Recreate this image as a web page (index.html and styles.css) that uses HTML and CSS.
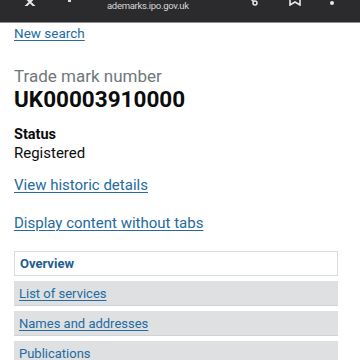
FILE: index.html
```html
<!DOCTYPE html>
<html lang="en">
<head>
<meta charset="utf-8">
<link rel="stylesheet" href="styles.css">
</head>
<body>
<div class="chrome">
  <div class="chrome-left">
    <svg class="ic-x" width="16" height="6" viewBox="0 0 16 6"><path d="M2 -4 L14 8 M14 -4 L2 8" stroke="#e8e8e8" stroke-width="2"/></svg>
    <span class="dot-sm"></span>
  </div>
  <div class="url">ademarks.ipo.gov.uk</div>
  <div class="chrome-right">
    <svg width="12" height="8" viewBox="0 0 12 8"><circle cx="7" cy="3" r="2" fill="none" stroke="#e8e8e8" stroke-width="1.5"/><path d="M2 -2 L6 2" stroke="#e8e8e8" stroke-width="1.5"/></svg>
    <svg width="14" height="6" viewBox="0 0 14 6"><path d="M2 -2 V5 L7 2 L12 5 V-2" fill="none" stroke="#e8e8e8" stroke-width="1.6"/></svg>
    <span class="kebab"></span>
  </div>
</div>
<main class="page">
  <a class="link new-search" href="#">New search</a>
  <div class="label">Trade mark number</div>
  <h1 class="number">UK00003910000</h1>
  <div class="status-title">Status</div>
  <div class="status-value">Registered</div>
  <a class="link block-link historic" href="#">View historic details</a>
  <a class="link block-link notabs" href="#">Display content without tabs</a>
  <ul class="tabs">
    <li class="tab active"><span>Overview</span></li>
    <li class="tab"><a class="link" href="#">List of services</a></li>
    <li class="tab"><a class="link" href="#">Names and addresses</a></li>
    <li class="tab"><a class="link" href="#">Publications</a></li>
  </ul>
</main>
</body>
</html>
```
FILE: styles.css
```css
* { box-sizing: border-box; }
html, body { margin: 0; padding: 0; background: #fff; }
body { font-family: Roboto, "Noto Sans", Arial, sans-serif; color: #0b0c0c; width: 360px; height: 360px; overflow: hidden; }

.chrome {
  height: 23px;
  background: #2b2b2d;
  border-bottom: 1px solid #8d8d8f;
  display: flex;
  align-items: flex-start;
}
.chrome-left { display: flex; align-items: flex-start; gap: 30px; padding-left: 22px; width: 107px; }
.dot-sm { width: 3px; height: 2px; background: #ddd; }
.url {
  font-size: 9.5px;
  color: #d6d6d6;
  letter-spacing: -0.3px;
  line-height: 12px;
}
.chrome-right { display: flex; align-items: flex-start; margin-left: auto; gap: 28px; padding-right: 26px; }
.kebab { width: 4px; height: 4px; border-radius: 50%; background: #e8e8e8; margin-top: 1px; }

.page { padding: 0 14px; }

.link { color: #236ba0; text-decoration: underline; text-underline-offset: 2px; text-decoration-thickness: 1px; }

.new-search { display: inline-block; font-size: 13.5px; line-height: 16px; margin-top: 2px; }

.label { font-size: 17px; color: #6f777b; line-height: 20px; margin-top: 24px; }
.number { font-size: 22.5px; font-weight: 700; line-height: 26px; margin: 0; }

.status-title { font-size: 14.5px; font-weight: 700; line-height: 18px; margin-top: 14px; }
.status-value { font-size: 15px; line-height: 18px; }

.block-link { display: block; width: max-content; font-size: 15px; line-height: 18px; }
.historic { margin-top: 14px; }
.notabs { margin-top: 20px; }

.tabs { list-style: none; margin: 19px 0 0; padding: 0; width: 324px; display: flex; flex-direction: column; gap: 5px; }
.tab {
  height: 25px;
  background: #dee0e2;
  border-bottom: 1px solid #d0d2d4;
  padding: 0 5px;
  display: flex;
  align-items: center;
  font-size: 13px;
}
.tab.active { background: #fff; border: 1px solid #dcdcdc; }
.tab.active span { color: #1d5d94; font-weight: 700; }
```
